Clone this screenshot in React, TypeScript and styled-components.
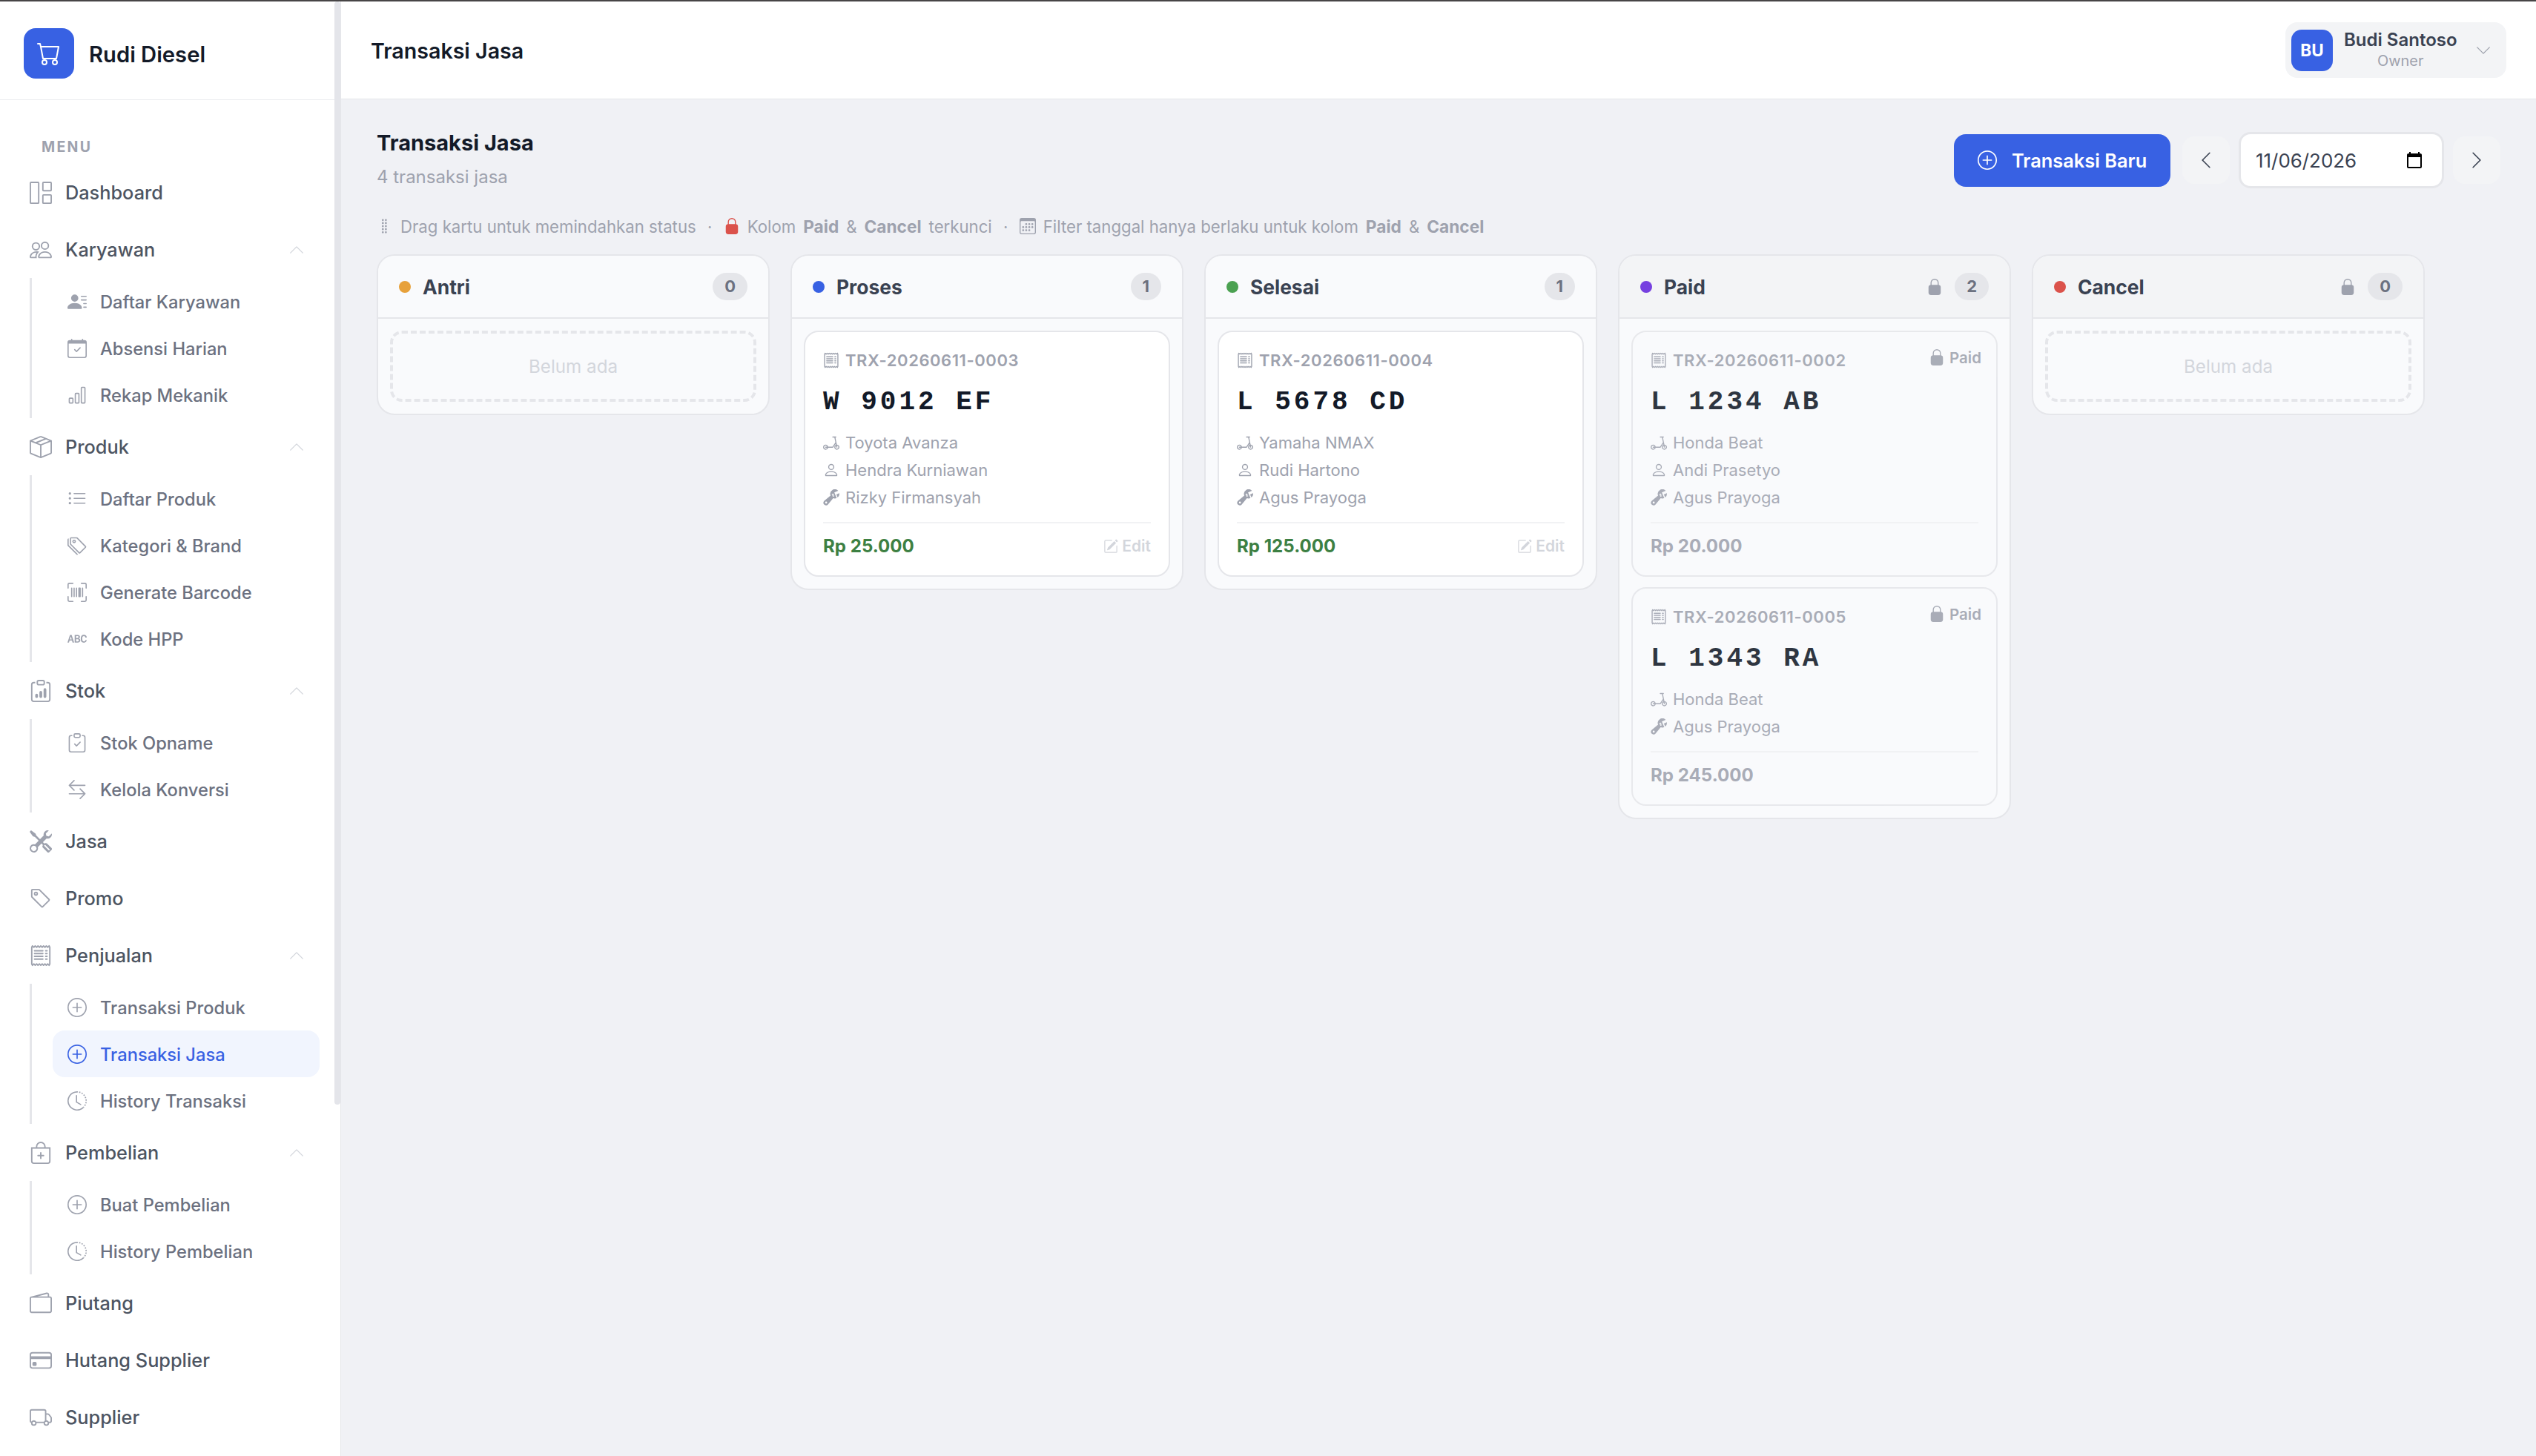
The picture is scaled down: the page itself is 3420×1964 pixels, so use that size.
import type { IconType } from 'react-icons';
import {
  BsAlphabetUppercase,
  BsArrowLeftRight,
  BsBagPlus,
  BsBarChart,
  BsBoxSeam,
  BsCalendar3,
  BsCalendarCheck,
  BsCart,
  BsChevronDown,
  BsChevronLeft,
  BsChevronRight,
  BsChevronUp,
  BsClipboardCheck,
  BsClipboardData,
  BsClockHistory,
  BsCreditCard,
  BsGrid1X2,
  BsGripVertical,
  BsListUl,
  BsPencilSquare,
  BsPeople,
  BsPerson,
  BsPersonLinesFill,
  BsPlusCircle,
  BsReceipt,
  BsScooter,
  BsTag,
  BsTags,
  BsTools,
  BsTruck,
  BsUpcScan,
  BsWallet2,
  BsWrenchAdjustable,
} from 'react-icons/bs';
import styled, { createGlobalStyle, css } from 'styled-components';

const colors = {
  primary: '#3861e3',
  primarySoft: '#f1f5fe',
  page: '#f0f1f5',
  panel: '#f9fafc',
  muted: '#f3f4f6',
  border: '#e5e6ea',
  ink: '#131a28',
  heading: '#3a4252',
  text: '#4d5562',
  subtext: '#6c7180',
  gray: '#9ea2ae',
  light: '#d3d6dc',
  green: '#3d8043',
  red: '#db524b',
};

const GlobalStyle = createGlobalStyle`
  * {
    box-sizing: border-box;
  }

  body {
    margin: 0;
    background: ${colors.page};
    font-family: Inter, 'Liberation Sans', sans-serif;
    white-space: nowrap;
    overflow: hidden;
  }

  svg {
    flex-shrink: 0;
    display: block;
  }
`;

const Window = styled.div`
  display: flex;
  height: 1964px;
  border-top: 2px solid #474546;
`;

/* Sidebar */

const Sidebar = styled.aside`
  width: 460px;
  flex-shrink: 0;
  display: flex;
  background: #fff;
  border-right: 1px solid ${colors.border};
`;

const SidebarContent = styled.div`
  flex: 1;
  min-width: 0;
`;

const ScrollThumb = styled.div`
  width: 8px;
  height: 1488px;
  border-radius: 4px;
  background: #e4e5ea;
`;

const Brand = styled.div`
  height: 133px;
  padding: 36px 32px 28px;
  display: flex;
  align-items: center;
  gap: 20px;
  border-bottom: 1px solid #ecedf0;
  color: ${colors.ink};
  font-size: 29.2px;
  font-weight: 600;

  span {
    padding-top: 2px;
  }
`;

const BrandLogo = styled.div`
  width: 68px;
  height: 68px;
  border-radius: 16px;
  display: flex;
  align-items: center;
  justify-content: center;
  background: ${colors.primary};
  color: #fff;
  font-size: 32px;
`;

const MenuLabel = styled.div`
  padding: 48px 0 8px 56px;
  line-height: 30px;
  font-size: 19.5px;
  font-weight: 700;
  letter-spacing: 2.3px;
  color: ${colors.gray};
`;

const NavItem = styled.div`
  height: 77px;
  padding: 0 40px;
  display: flex;
  align-items: center;
  gap: 18px;
  color: ${colors.text};
  font-size: 25.3px;
  font-weight: 500;

  > svg {
    font-size: 30px;
    color: ${colors.gray};
  }

  > svg:last-child {
    margin-left: auto;
    font-size: 22px;
    color: ${colors.light};
  }
`;

const SubMenu = styled.div`
  margin: 0 20px 0 40px;
  padding-left: 28px;
  border-left: 3px solid ${colors.border};
`;

const SubItem = styled.div<{ $active?: boolean }>`
  height: 63px;
  padding: 0 20px;
  display: flex;
  align-items: center;
  gap: 18px;
  border-radius: 16px;
  font-size: 23.7px;
  font-weight: 450;
  color: ${colors.subtext};

  svg {
    font-size: 26px;
    color: ${colors.gray};
  }

  span {
    padding-top: 2px;
  }

  ${({ $active }) =>
    $active &&
    css`
      background: ${colors.primarySoft};
      color: ${colors.primary};

      svg {
        color: ${colors.primary};
      }
    `}
`;

/* Top bar */

const Main = styled.main`
  flex: 1;
  min-width: 0;
`;

const TopBar = styled.header`
  height: 132px;
  padding: 0 40px;
  display: flex;
  align-items: center;
  justify-content: space-between;
  background: #fff;
  border-bottom: 1px solid ${colors.border};
  color: ${colors.ink};
  font-size: 28.6px;
  font-weight: 600;

  > span {
    padding-top: 2px;
  }
`;

const Profile = styled.div`
  width: 298px;
  height: 75px;
  padding: 0 20px 0 8px;
  display: flex;
  align-items: center;
  border-radius: 16px;
  background: ${colors.muted};

  > svg {
    margin-left: auto;
    font-size: 22px;
    color: ${colors.gray};
  }
`;

const Avatar = styled.div`
  width: 56px;
  height: 56px;
  margin-right: 15px;
  border-radius: 14px;
  display: flex;
  align-items: center;
  justify-content: center;
  background: ${colors.primary};
  color: #fff;
  font-size: 22.5px;
  font-weight: 700;
`;

const ProfileText = styled.div`
  display: flex;
  flex-direction: column;
  align-items: center;
  line-height: 29px;
  font-size: 24px;
  color: ${colors.heading};

  small {
    font-size: 19.9px;
    font-weight: 400;
    color: ${colors.gray};
  }
`;

/* Page */

const Page = styled.section`
  padding: 36px 48px;
`;

const PageHead = styled.div`
  height: 92px;
  display: flex;
  align-items: center;
  justify-content: space-between;
`;

const PageTitle = styled.h1`
  margin: 0;
  line-height: 44px;
  font-size: 29px;
  font-weight: 700;
  color: ${colors.ink};
`;

const PageCount = styled.p`
  margin: 0;
  line-height: 47px;
  font-size: 24px;
  color: ${colors.gray};
`;

const Toolbar = styled.div`
  display: flex;
  align-items: center;
  gap: 12px;
`;

const PrimaryButton = styled.div`
  width: 292px;
  height: 71px;
  margin-right: 4px;
  padding-left: 32px;
  display: flex;
  align-items: center;
  gap: 20px;
  border-radius: 16px;
  background: ${colors.primary};
  color: #fff;
  font-size: 25.4px;
  font-weight: 600;

  svg {
    font-size: 26px;
  }
`;

const ArrowButton = styled.div`
  width: 64px;
  height: 64px;
  display: flex;
  align-items: center;
  justify-content: center;
  border-radius: 16px;
  background: #f3f4f6;
  color: ${colors.heading};
  font-size: 26px;
`;

const DateField = styled.div`
  width: 277px;
  height: 76px;
  padding: 0 25px 0 20px;
  display: flex;
  align-items: center;
  justify-content: space-between;
  border: 3px solid ${colors.border};
  border-radius: 16px;
  background: #fff;
  color: ${colors.heading};
  font-size: 25.9px;
`;

const Hint = styled.div`
  height: 28px;
  margin: 29px 0 24px;
  display: flex;
  align-items: center;
  gap: 10px;
  font-size: 22.2px;
  color: ${colors.gray};

  svg {
    font-size: 22px;
  }

  b {
    font-size: 22.7px;
  }

  i {
    width: 17px;
    text-align: center;
    font-style: normal;
  }
`;

/* Board */

const Board = styled.div`
  display: flex;
  align-items: flex-start;
  gap: 28px;
`;

const Column = styled.div`
  width: 530px;
  border: 2px solid ${colors.border};
  border-radius: 24px;
  overflow: hidden;
  background: ${colors.panel};
`;

const ColumnHead = styled.div<{ $locked?: boolean }>`
  height: 85px;
  padding: 0 28px;
  display: flex;
  align-items: center;
  gap: 16px;
  border-bottom: 2px solid ${colors.border};
  background: ${({ $locked }) => ($locked ? colors.muted : colors.panel)};

  svg {
    font-size: 22px;
    color: ${colors.gray};
  }
`;

const Dot = styled.span<{ $color: string }>`
  width: 16px;
  height: 16px;
  border-radius: 50%;
  background: ${({ $color }) => $color};
`;

const ColumnTitle = styled.h2`
  flex: 1;
  margin: 0;
  font-size: 26.4px;
  font-weight: 700;
  color: ${colors.heading};
`;

const Count = styled.span`
  height: 37px;
  padding: 0 16px;
  border-radius: 19px;
  line-height: 37px;
  background: ${colors.border};
  color: ${colors.subtext};
  font-size: 22px;
  font-weight: 700;
`;

const ColumnBody = styled.div`
  padding: 16px;
  display: flex;
  flex-direction: column;
  gap: 14px;
`;

const Empty = styled.div`
  height: 96px;
  display: flex;
  align-items: center;
  justify-content: center;
  border: 4px dashed ${colors.border};
  border-radius: 16px;
  color: ${colors.light};
  font-size: 24.2px;
`;

const Card = styled.article<{ $locked?: boolean }>`
  position: relative;
  padding: 22px 24px 21px;
  border: 2px solid ${colors.border};
  border-radius: 20px;
  background: ${({ $locked }) => ($locked ? colors.panel : '#fff')};
  opacity: ${({ $locked }) => ($locked ? 0.88 : 1)};
  color: ${colors.gray};
  font-size: 22px;

  svg {
    font-size: 22px;
  }
`;

const CardCode = styled.div`
  display: flex;
  align-items: center;
  gap: 8px;
  line-height: 32px;
  font-weight: 600;
  letter-spacing: 0.56px;
`;

const Plate = styled.div`
  margin: 17px 0 11px;
  line-height: 48px;
  font-family: 'Courier New', 'Liberation Mono', monospace;
  font-size: 36px;
  font-weight: 700;
  letter-spacing: 4px;
  color: ${colors.ink};
`;

const Detail = styled.div`
  height: 37px;
  display: flex;
  align-items: center;
  gap: 8px;
`;

const CardFoot = styled.div`
  height: 51px;
  margin-top: 15px;
  padding-top: 12px;
  display: flex;
  align-items: center;
  justify-content: space-between;
  border-top: 2px solid #f1f2f4;
`;

const Price = styled.span<{ $locked?: boolean }>`
  font-size: 24.1px;
  font-weight: 700;
  color: ${({ $locked }) => ($locked ? colors.gray : colors.green)};
`;

const EditLink = styled.span`
  display: flex;
  align-items: center;
  gap: 5px;
  color: ${colors.light};
  font-size: 21px;
  font-weight: 600;

  svg {
    font-size: 20px;
  }
`;

const LockTag = styled.span`
  position: absolute;
  top: 18px;
  right: 20px;
  height: 32px;
  display: flex;
  align-items: center;
  gap: 6px;
  font-size: 20.5px;
  font-weight: 600;
`;

function LockIcon({ color = 'currentColor' }: { color?: string }) {
  return (
    <svg width="1em" height="1em" viewBox="0 0 16 16" fill={color} fillRule="evenodd">
      <path d="M8 0a4 4 0 0 1 4 4v2.05a2.5 2.5 0 0 1 2 2.45v5a2.5 2.5 0 0 1-2.5 2.5h-7A2.5 2.5 0 0 1 2 13.5v-5a2.5 2.5 0 0 1 2-2.45V4a4 4 0 0 1 4-4m0 1a3 3 0 0 0-3 3v2h6V4a3 3 0 0 0-3-3" />
    </svg>
  );
}

function DateIcon() {
  return (
    <svg width="24" height="24" viewBox="0 0 24 24" fill="#000">
      <path d="M20 3h-1V1h-2v2H7V1H5v2H4c-1.1 0-2 .9-2 2v16c0 1.1.9 2 2 2h16c1.1 0 2-.9 2-2V5c0-1.1-.9-2-2-2zm0 18H4V8h16v13z" />
    </svg>
  );
}

type SubLink = { icon: IconType; label: string; active?: boolean };
type NavLink = { icon: IconType; label: string; items?: SubLink[] };

const menu: NavLink[] = [
  { icon: BsGrid1X2, label: 'Dashboard' },
  {
    icon: BsPeople,
    label: 'Karyawan',
    items: [
      { icon: BsPersonLinesFill, label: 'Daftar Karyawan' },
      { icon: BsCalendarCheck, label: 'Absensi Harian' },
      { icon: BsBarChart, label: 'Rekap Mekanik' },
    ],
  },
  {
    icon: BsBoxSeam,
    label: 'Produk',
    items: [
      { icon: BsListUl, label: 'Daftar Produk' },
      { icon: BsTags, label: 'Kategori & Brand' },
      { icon: BsUpcScan, label: 'Generate Barcode' },
      { icon: BsAlphabetUppercase, label: 'Kode HPP' },
    ],
  },
  {
    icon: BsClipboardData,
    label: 'Stok',
    items: [
      { icon: BsClipboardCheck, label: 'Stok Opname' },
      { icon: BsArrowLeftRight, label: 'Kelola Konversi' },
    ],
  },
  { icon: BsTools, label: 'Jasa' },
  { icon: BsTag, label: 'Promo' },
  {
    icon: BsReceipt,
    label: 'Penjualan',
    items: [
      { icon: BsPlusCircle, label: 'Transaksi Produk' },
      { icon: BsPlusCircle, label: 'Transaksi Jasa', active: true },
      { icon: BsClockHistory, label: 'History Transaksi' },
    ],
  },
  {
    icon: BsBagPlus,
    label: 'Pembelian',
    items: [
      { icon: BsPlusCircle, label: 'Buat Pembelian' },
      { icon: BsClockHistory, label: 'History Pembelian' },
    ],
  },
  { icon: BsWallet2, label: 'Piutang' },
  { icon: BsCreditCard, label: 'Hutang Supplier' },
  { icon: BsTruck, label: 'Supplier' },
];

type Transaction = {
  code: string;
  plate: string;
  vehicle: string;
  customer?: string;
  mechanic: string;
  price: string;
};

type Status = {
  name: string;
  color: string;
  locked?: boolean;
  cards: Transaction[];
};

const statuses: Status[] = [
  { name: 'Antri', color: '#e7a13b', cards: [] },
  {
    name: 'Proses',
    color: colors.primary,
    cards: [
      {
        code: 'TRX-20260611-0003',
        plate: 'W 9012 EF',
        vehicle: 'Toyota Avanza',
        customer: 'Hendra Kurniawan',
        mechanic: 'Rizky Firmansyah',
        price: 'Rp 25.000',
      },
    ],
  },
  {
    name: 'Selesai',
    color: '#4ba151',
    cards: [
      {
        code: 'TRX-20260611-0004',
        plate: 'L 5678 CD',
        vehicle: 'Yamaha NMAX',
        customer: 'Rudi Hartono',
        mechanic: 'Agus Prayoga',
        price: 'Rp 125.000',
      },
    ],
  },
  {
    name: 'Paid',
    color: '#7640e0',
    locked: true,
    cards: [
      {
        code: 'TRX-20260611-0002',
        plate: 'L 1234 AB',
        vehicle: 'Honda Beat',
        customer: 'Andi Prasetyo',
        mechanic: 'Agus Prayoga',
        price: 'Rp 20.000',
      },
      {
        code: 'TRX-20260611-0005',
        plate: 'L 1343 RA',
        vehicle: 'Honda Beat',
        mechanic: 'Agus Prayoga',
        price: 'Rp 245.000',
      },
    ],
  },
  { name: 'Cancel', color: colors.red, locked: true, cards: [] },
];

function TransactionCard({ trx, status }: { trx: Transaction; status: Status }) {
  return (
    <Card $locked={status.locked}>
      {status.locked && (
        <LockTag>
          <LockIcon /> {status.name}
        </LockTag>
      )}
      <CardCode>
        <BsReceipt /> {trx.code}
      </CardCode>
      <Plate>{trx.plate}</Plate>
      <Detail>
        <BsScooter /> {trx.vehicle}
      </Detail>
      {trx.customer && (
        <Detail>
          <BsPerson /> {trx.customer}
        </Detail>
      )}
      <Detail>
        <BsWrenchAdjustable /> {trx.mechanic}
      </Detail>
      <CardFoot>
        <Price $locked={status.locked}>{trx.price}</Price>
        {!status.locked && (
          <EditLink>
            <BsPencilSquare /> Edit
          </EditLink>
        )}
      </CardFoot>
    </Card>
  );
}

function SideMenu() {
  return (
    <Sidebar>
      <SidebarContent>
        <Brand>
          <BrandLogo>
            <BsCart />
          </BrandLogo>
          <span>Rudi Diesel</span>
        </Brand>
        <MenuLabel>MENU</MenuLabel>
        {menu.map(({ icon: Icon, label, items }) => (
          <div key={label}>
            <NavItem>
              <Icon />
              <span>{label}</span>
              {items && <BsChevronUp />}
            </NavItem>
            {items && (
              <SubMenu>
                {items.map(({ icon: SubIcon, label: subLabel, active }) => (
                  <SubItem key={subLabel} $active={active}>
                    <SubIcon />
                    <span>{subLabel}</span>
                  </SubItem>
                ))}
              </SubMenu>
            )}
          </div>
        ))}
      </SidebarContent>
      <ScrollThumb />
    </Sidebar>
  );
}

function App() {
  return (
    <>
      <GlobalStyle />
      <Window>
        <SideMenu />
        <Main>
          <TopBar>
            <span>Transaksi Jasa</span>
            <Profile>
              <Avatar>BU</Avatar>
              <ProfileText>
                Budi Santoso
                <small>Owner</small>
              </ProfileText>
              <BsChevronDown />
            </Profile>
          </TopBar>
          <Page>
            <PageHead>
              <div>
                <PageTitle>Transaksi Jasa</PageTitle>
                <PageCount>4 transaksi jasa</PageCount>
              </div>
              <Toolbar>
                <PrimaryButton>
                  <BsPlusCircle />
                  Transaksi Baru
                </PrimaryButton>
                <ArrowButton>
                  <BsChevronLeft />
                </ArrowButton>
                <DateField>
                  11/06/2026
                  <DateIcon />
                </DateField>
                <ArrowButton>
                  <BsChevronRight />
                </ArrowButton>
              </Toolbar>
            </PageHead>
            <Hint>
              <BsGripVertical />
              <span>Drag kartu untuk memindahkan status</span>
              <i>·</i>
              <LockIcon color={colors.red} />
              <span>Kolom</span>
              <b>Paid</b>
              <span>&amp;</span>
              <b>Cancel</b>
              <span>terkunci</span>
              <i>·</i>
              <BsCalendar3 />
              <span>Filter tanggal hanya berlaku untuk kolom</span>
              <b>Paid</b>
              <span>&amp;</span>
              <b>Cancel</b>
            </Hint>
            <Board>
              {statuses.map((status) => (
                <Column key={status.name}>
                  <ColumnHead $locked={status.locked}>
                    <Dot $color={status.color} />
                    <ColumnTitle>{status.name}</ColumnTitle>
                    {status.locked && <LockIcon />}
                    <Count>{status.cards.length}</Count>
                  </ColumnHead>
                  <ColumnBody>
                    {status.cards.length === 0 && <Empty>Belum ada</Empty>}
                    {status.cards.map((trx) => (
                      <TransactionCard key={trx.code} trx={trx} status={status} />
                    ))}
                  </ColumnBody>
                </Column>
              ))}
            </Board>
          </Page>
        </Main>
      </Window>
    </>
  );
}

export default App;
